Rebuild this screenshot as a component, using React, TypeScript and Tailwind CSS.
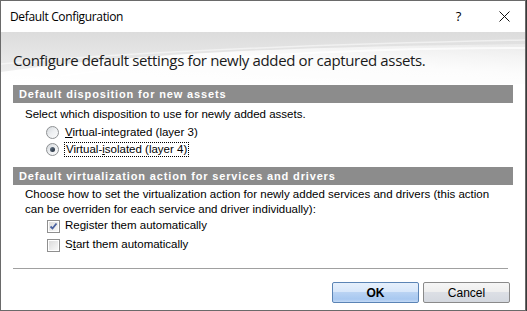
import React from "react";

// Small classic-style radio button
function Radio({ checked }: { checked?: boolean }) {
  return (
    <div className="w-[13px] h-[13px] rounded-full border border-[#8e9193] bg-gradient-to-br from-[#d4d8dc] via-[#eef0f2] to-[#fbfbfb] flex items-center justify-center shrink-0">
      {checked && <div className="w-[5px] h-[5px] rounded-full bg-gradient-to-br from-[#6b7c8f] to-[#1f2a36]" />}
    </div>
  );
}

function Check({ checked }: { checked?: boolean }) {
  return (
    <div className="w-[13px] h-[13px] border border-[#8f8f8f] bg-white p-[1px] shrink-0">
      <div className="w-full h-full bg-gradient-to-br from-[#dcdcdc] to-[#f8f8f8] flex items-center justify-center">
        {checked && (
          <svg width="9" height="9" viewBox="0 0 9 9">
            <path d="M1.5 4.5 L3.5 6.5 L7.5 1.5" fill="none" stroke="#4a62a0" strokeWidth="1.8" />
          </svg>
        )}
      </div>
    </div>
  );
}

function SectionBar({ title }: { title: string }) {
  return (
    <div className="h-[18px] bg-[#8c8c8c] flex items-center pl-[6px] text-white font-bold text-[11px] tracking-[0.85px]">
      {title}
    </div>
  );
}

export default function App() {
  return (
    <div className="w-[527px] h-[311px] bg-[#3a3a3a] flex font-['Liberation_Sans',Arial,sans-serif]">
      <div className="w-[526px] h-[311px] border border-[#6a6a6a] bg-white flex flex-col">
        {/* Title bar */}
        <div className="h-[31px] flex items-center pl-[9px] pr-[15px] text-[12px] text-black font-['Open_Sans',sans-serif] tracking-[-0.35px]">
          <span className="flex-1">Default Configuration</span>
          <span className="text-[13px] mr-[38px]">?</span>
          <svg width="11" height="11" viewBox="0 0 11 11">
            <path d="M0.5 0.5 L10.5 10.5 M10.5 0.5 L0.5 10.5" stroke="#111" strokeWidth="1" />
          </svg>
        </div>

        {/* Header with swoosh */}
        <div className="relative h-[52px] bg-gradient-to-b from-[#dcdcdc] to-[#f2f2f2]">
          <svg className="absolute inset-0" width="524" height="52" viewBox="0 0 524 52" preserveAspectRatio="none">
            <defs>
              <linearGradient id="sw" x1="0" y1="1" x2="1" y2="0">
                <stop offset="0" stopColor="#ffffff" stopOpacity="1" />
                <stop offset="0.6" stopColor="#ffffff" stopOpacity="0.85" />
                <stop offset="1" stopColor="#ffffff" stopOpacity="0.3" />
              </linearGradient>
            </defs>
            <path d="M0 40 C120 22 300 14 524 12 L524 52 L0 52 Z" fill="url(#sw)" />
            <path d="M60 44 C200 24 360 16 524 16" fill="none" stroke="#ffffff" strokeOpacity="0.7" strokeWidth="2" />
            <path d="M0 32 C150 18 330 12 524 8" fill="none" stroke="#ffffff" strokeOpacity="0.5" strokeWidth="1.5" />
          </svg>
          <div className="relative pl-[12px] pt-[17px] text-[15px] leading-[22px] text-[#1a1a1a] font-['Open_Sans',sans-serif] tracking-[-0.35px]">
            Configure default settings for newly added or captured assets.
          </div>
        </div>

        {/* Body */}
        <div className="flex flex-col px-[12px] pt-[1px] text-[11.5px] text-black">
          <SectionBar title="Default disposition for new assets" />
          <div className="h-[18px] mt-[3px] flex items-center pl-[12px]">
            Select which disposition to use for newly added assets.
          </div>
          <div className="h-[17px] flex items-center pl-[33px] gap-[6px]">
            <Radio />
            <span>
              <span className="underline">V</span>irtual-integrated (layer 3)
            </span>
          </div>
          <div className="h-[17px] flex items-center pl-[33px] gap-[5px]">
            <Radio checked />
            <span className="border border-dotted border-black px-[1px] leading-[13px]">
              Virtual-<span className="underline">i</span>solated (layer 4)
            </span>
          </div>

          <div className="mt-[9px]">
            <SectionBar title="Default virtualization action for services and drivers" />
          </div>
          <div className="mt-[2px] pl-[12px] leading-[15px]">
            Choose how to set the virtualization action for newly added services and drivers (this action
            <br />
            can be overriden for each service and driver individually):
          </div>
          <div className="h-[18px] flex items-center pl-[34px] gap-[5px]">
            <Check checked />
            <span>
              Re<span className="underline">g</span>ister them automatically
            </span>
          </div>
          <div className="h-[20px] flex items-center pl-[34px] gap-[5px]">
            <Check />
            <span>
              S<span className="underline">t</span>art them automatically
            </span>
          </div>

          <div className="mt-[13px] w-[495px] border-t border-[#a0a0a0]" />

          <div className="mt-[13px] flex justify-end gap-[4px] pr-[3px]">
            <button className="w-[87px] h-[21px] rounded-[2px] border border-[#5b84b5] bg-[linear-gradient(to_bottom,#e6f0fc_0%,#d8e7fa_45%,#b9d3f3_50%,#a8c8f0_85%,#c4daf6_100%)] text-[12px] font-bold text-black">
              OK
            </button>
            <button className="w-[87px] h-[21px] rounded-[2px] border border-[#8a8a8a] bg-[linear-gradient(to_bottom,#f6f6f6_0%,#eeeeee_45%,#dcdfe5_50%,#d4d8df_100%)] text-[12px] text-black">
              Cancel
            </button>
          </div>
        </div>
      </div>
    </div>
  );
}
